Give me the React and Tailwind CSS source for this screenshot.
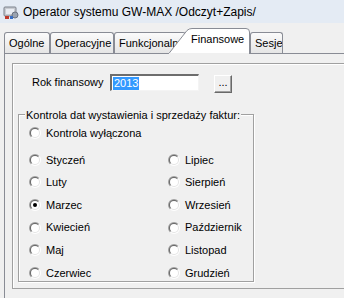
import React from 'react';

function Radio({ checked }) {
  return (
    <svg width="12" height="12" viewBox="0 0 12 12" className="shrink-0">
      <defs>
        <linearGradient id="rOuter" x1="0" y1="0" x2="1" y2="1">
          <stop offset="0.45" stopColor="#a0a0a0" />
          <stop offset="0.55" stopColor="#ffffff" />
        </linearGradient>
        <linearGradient id="rInner" x1="0" y1="0" x2="1" y2="1">
          <stop offset="0.45" stopColor="#696969" />
          <stop offset="0.55" stopColor="#e3e3e3" />
        </linearGradient>
      </defs>
      <circle cx="6" cy="6" r="6" fill="url(#rOuter)" />
      <circle cx="6" cy="6" r="5" fill="url(#rInner)" />
      <circle cx="6" cy="6" r="4" fill="#ffffff" />
      {checked && <circle cx="6" cy="6" r="2" fill="#000000" />}
    </svg>
  );
}

function RadioRow({ label, checked }) {
  return (
    <div className="flex items-center gap-[5px] h-[22.6px]">
      <Radio checked={checked} />
      <span>{label}</span>
    </div>
  );
}

function Tab({ label, w }) {
  return (
    <div
      className={`${w} h-[21px] border border-b-0 border-[#898c95] rounded-t-[3px] bg-gradient-to-b from-[#fbfbfb] to-[#e5e5e5] flex items-center pl-[4px] overflow-hidden whitespace-nowrap`}
    >
      {label}
    </div>
  );
}

const left = ['Styczeń', 'Luty', 'Marzec', 'Kwiecień', 'Maj', 'Czerwiec'];
const right = ['Lipiec', 'Sierpień', 'Wrzesień', 'Październik', 'Listopad', 'Grudzień'];

export default function App() {
  return (
    <div className="w-[344px] h-[298px] overflow-hidden bg-[#f0f0f0] flex flex-col font-['Liberation_Sans',Arial,sans-serif] text-[11px] text-black">
      {/* title bar */}
      <div className="h-[23px] shrink-0 bg-[#e4ebf4] flex items-center pl-[3px] gap-[4px] whitespace-nowrap">
        <svg width="16" height="16" viewBox="0 0 16 16">
          <rect x="1" y="3" width="12" height="9" rx="1" fill="#c9ccd2" stroke="#7d828c" />
          <rect x="3" y="5" width="8" height="5" fill="#e8ecf2" />
          <circle cx="12" cy="11" r="3" fill="#9aa3b0" stroke="#6a7280" />
          <rect x="2" y="12" width="4" height="3" fill="#c0392b" />
          <rect x="7" y="12" width="3" height="3" fill="#3a6fc4" />
        </svg>
        <span className="text-[12px] text-black">Operator systemu GW-MAX /Odczyt+Zapis/</span>
      </div>

      <div className="flex flex-1">
        {/* window frame */}
        <div className="w-[4px] bg-[#d9e3ef]" />

        <div className="flex-1 pl-[4px] pt-[5px] flex flex-col">
          {/* tabs */}
          <div className="h-[25px] flex items-end">
            <Tab label="Ogólne" w="w-[46px]" />
            <Tab label="Operacyjne" w="w-[64px]" />
            <Tab label="Funkcjonalne" w="w-[72px]" />
            <div className="relative z-10 -ml-[18px] w-[82px] h-[26px] mb-[-1px] flex items-center pl-[23px] whitespace-nowrap">
              <svg className="absolute inset-0" width="82" height="26" viewBox="0 0 82 26">
                <path
                  d="M0.5 26 L19 2.5 Q21 0.5 24 0.5 L78 0.5 Q81.5 0.5 81.5 4 L81.5 26 Z"
                  fill="#ffffff"
                  stroke="#898c95"
                />
                <rect x="1" y="25" width="80" height="2" fill="#f0f0f0" />
              </svg>
              <span className="relative -mt-[3px]">Finansowe</span>
            </div>
            <Tab label="Sesje" w="w-[33px]" />
          </div>

          {/* tab body */}
          <div className="flex-1 border-l border-t border-[#898c95] pl-[7px] pt-[9px]">
            <div className="w-[400px] h-[226px] border border-[#a0a0a0] shadow-[inset_1px_1px_0_#ffffff]">
              <div className="mt-[10px] pl-[19px] flex items-center h-[17px]">
                <span className="w-[78px]">Rok finansowy</span>
                <div className="w-[89px] h-[17px] bg-white border-t-2 border-l-2 border-t-[#6d6d6d] border-l-[#6d6d6d] border-b border-r border-b-[#f4f4f4] border-r-[#f4f4f4] flex items-center pl-[1px]">
                  <span className="bg-[#3399ff] text-white leading-[13px] px-[1px]">2013</span>
                </div>
                <div className="ml-[15px] mt-[2px] w-[18px] h-[18px] bg-[#f0f0f0] border border-t-white border-l-white border-b-[#696969] border-r-[#696969] shadow-[inset_-1px_-1px_0_#a0a0a0] flex items-center justify-center leading-none pb-[3px]">
                  ...
                </div>
              </div>

              {/* group box */}
              <div className="relative ml-[5px] mt-[23px] w-[236px] h-[168px] border border-[#a0a0a0] shadow-[1px_1px_0_#ffffff,inset_1px_1px_0_#ffffff]">
                <span className="absolute left-[6px] -top-[8px] bg-[#f0f0f0] px-[1px] whitespace-nowrap">
                  Kontrola dat wystawienia i sprzedaży faktur:
                </span>
                <div className="pl-[10px] pt-[7px]">
                  <RadioRow label="Kontrola wyłączona" />
                  <div className="mt-[4px] grid grid-cols-[139px_1fr]">
                    <div>
                      {left.map((m) => (
                        <RadioRow key={m} label={m} checked={m === 'Marzec'} />
                      ))}
                    </div>
                    <div>
                      {right.map((m) => (
                        <RadioRow key={m} label={m} />
                      ))}
                    </div>
                  </div>
                </div>
              </div>
            </div>
          </div>
        </div>
      </div>
    </div>
  );
}
